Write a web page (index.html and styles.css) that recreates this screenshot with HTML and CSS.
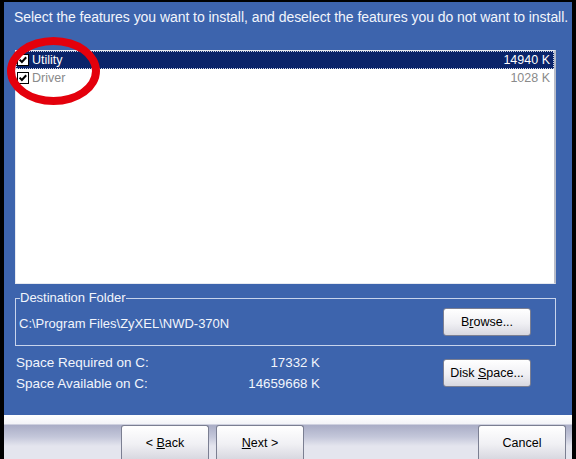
FILE: index.html
```html
<!DOCTYPE html>
<html>
<head>
<meta charset="utf-8">
<link rel="stylesheet" href="styles.css">
</head>
<body>
<div class="window">
  <div class="panel">
    <p class="intro">Select the features you want to install, and deselect the features you do not want to install.</p>
    <div class="list">
      <div class="row selected">
        <span class="cb"><svg width="12" height="12" viewBox="0 0 12 12"><rect x="0.5" y="0.5" width="11" height="11" fill="#fff" stroke="#000"/><path d="M2.6 5.6 L4.9 8 L9.2 3.3" fill="none" stroke="#000" stroke-width="2"/></svg></span>
        <span class="name">Utility</span>
        <span class="size">14940 K</span>
      </div>
      <div class="row disabled">
        <span class="cb"><svg width="12" height="12" viewBox="0 0 12 12"><rect x="0.5" y="0.5" width="11" height="11" fill="#fff" stroke="#000"/><path d="M2.6 5.6 L4.9 8 L9.2 3.3" fill="none" stroke="#000" stroke-width="2"/></svg></span>
        <span class="name">Driver</span>
        <span class="size">1028 K</span>
      </div>
    </div>
    <fieldset class="dest">
      <legend>Destination Folder</legend>
      <span class="path">C:\Program Files\ZyXEL\NWD-370N</span>
      <button class="btn">B<u>r</u>owse...</button>
    </fieldset>
    <div class="space">
      <div class="space-grid">
        <span>Space Required on C:</span><span class="val">17332 K</span>
        <span>Space Available on C:</span><span class="val">14659668 K</span>
      </div>
      <button class="btn disk">Disk <u>S</u>pace...</button>
    </div>
  </div>
  <div class="footer">
    <div class="bar">
      <button class="btn nav back">&lt; <u>B</u>ack</button>
      <button class="btn nav"><u>N</u>ext &gt;</button>
      <button class="btn nav cancel">Cancel</button>
    </div>
  </div>
  <div class="annotation"></div>
</div>
</body>
</html>
```
FILE: styles.css
```css
* { box-sizing: border-box; }
html, body { margin: 0; padding: 0; background: #000; }
body { width: 576px; height: 459px; overflow: hidden; font-family: "Liberation Sans", Arial, sans-serif; font-size: 13px; }
.window {
  position: relative;
  width: 576px;
  height: 459px;
  border-left: 4px solid #000;
  border-right: 4px solid #000;
  border-top: 2px solid #000;
  display: flex;
  flex-direction: column;
  background: #3d64ad;
}
.panel {
  height: 417px;
  background: #3d64ad;
  padding: 7px 16px 0 11px;
  color: #f2f5fc;
}
.intro { margin: 0 -20px 0 -1px; line-height: 16px; font-size: 14px; letter-spacing: -0.05px; white-space: nowrap; }
.list {
  margin-top: 25px;
  height: 234px;
  background: #fff;
  border: 1px solid #e6e9f0;
  border-right: 2px solid #b8bcc8;
  padding: 0;
}
.row { display: flex; align-items: center; height: 18px; padding: 0 4px 0 1px; font-size: 12.5px; }
.row.selected { background: #0a246a; color: #fff; outline: 1px dotted #cfd6e6; outline-offset: -1px; }
.row.disabled { color: #8a8a8a; }
.cb { display: flex; margin-right: 3px; }
.name { flex: 1; }
.dest {
  margin: 7px 0 0;
  padding: 0 24px 6px 3px;
  border: 1px solid #c8d4ec;
  display: flex;
  align-items: center;
  justify-content: space-between;
  height: 55px;
}
.dest legend { padding: 0; margin-left: 1px; line-height: 14px; font-size: 13px; }
.path { padding-top: 2px; font-size: 13px; }
.btn {
  font-family: "Liberation Sans", Arial, sans-serif;
  font-size: 12.5px;
  color: #000;
  width: 88px;
  height: 28px;
  border: 1px solid #7b7f92;
  border-radius: 3px;
  background: linear-gradient(#ffffff, #f0f0f4 55%, #d8d8e0);
  padding: 0;
}
.space { display: flex; align-items: flex-start; margin-top: 9px; padding-right: 25px; }
.space-grid { display: grid; grid-template-columns: 220px 84px; row-gap: 6px; line-height: 15px; margin-left: 1px; font-size: 13.5px; }
.val { text-align: right; font-size: 13.3px; }
.disk { margin-left: auto; margin-top: 4px; }
.footer {
  flex: 1;
  background: linear-gradient(#ffffff, #f3f4f8 9px, #a9adc6 10px, #c4c7da 22px, #e4e5ee 31px);
}
.bar { display: flex; padding: 10px 6px 0 117px; gap: 7px; }
.nav { height: 34px; width: 88px; border-radius: 3px 3px 0 0; border-bottom: none; }
.cancel { margin-left: auto; }
.annotation {
  position: absolute;
  left: 3px;
  top: 35px;
  width: 93px;
  height: 68px;
  border: 8px solid #e4000c;
  border-radius: 50%;
  pointer-events: none;
}
```
